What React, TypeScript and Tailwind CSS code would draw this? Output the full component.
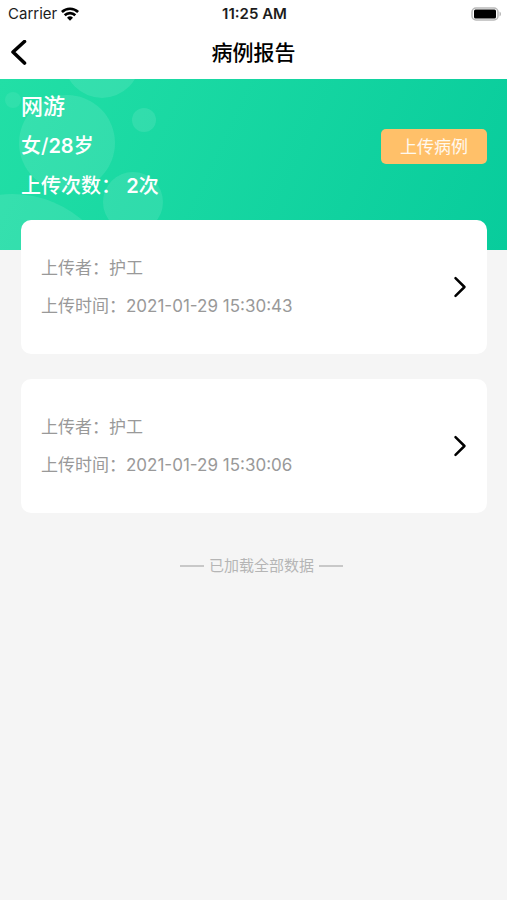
interface Report {
  uploader: string
  time: string
}

const reports: Report[] = [
  { uploader: '护工', time: '2021-01-29 15:30:43' },
  { uploader: '护工', time: '2021-01-29 15:30:06' },
]

function StatusBar() {
  return (
    <div className="grid h-7 grid-cols-[1fr_auto_1fr] items-center pr-1.5 pl-2 text-[15px] text-[#1c1c1c]">
      <div className="flex items-center gap-1">
        <span>Carrier</span>
        <svg width="18" height="14" viewBox="0 0 18 14" fill="none" stroke="#000" strokeWidth="2.6" aria-hidden="true">
          <path d="M0.900 5a11.600 11.600 0 0 1 16.200 0" />
          <path d="M3.700 8.300a7.600 7.600 0 0 1 10.600 0" />
          <path d="M9 13.800 6 10.800a4.300 4.300 0 0 1 6 0Z" fill="#000" stroke="none" />
        </svg>
      </div>
      <span className="text-center font-semibold">11:25 AM</span>
      <svg className="justify-self-end" width="30" height="15" viewBox="0 0 30 15" aria-hidden="true">
        <rect x="1" y="1" width="26" height="12" rx="4" fill="#fff" stroke="#b9b9b9" strokeWidth="1.5" />
        <rect x="3" y="2.500" width="22" height="9" rx="1.5" fill="#000" />
        <path d="M28.500 4.500v5c1-.5 1.500-1.300 1.500-2.500S29.500 5 28.500 4.500Z" fill="#b9b9b9" />
      </svg>
    </div>
  )
}

function NavBar() {
  return (
    <header className="grid h-[51px] grid-cols-[48px_1fr_48px] items-center pb-0.5">
      <button type="button" aria-label="返回" className="flex h-full items-center pl-2">
        <svg width="20" height="26" viewBox="0 0 20 26" fill="none" stroke="#000" strokeWidth="3.6" strokeLinecap="round" strokeLinejoin="round">
          <path d="M16.500 1.500 5 12l11.500 11" />
        </svg>
      </button>
      <h1 className="text-center text-[21px] font-medium text-black">病例报告</h1>
    </header>
  )
}

function Bubbles() {
  return (
    <svg className="absolute top-0 left-0" width="200" height="171" viewBox="0 0 200 171" fill="#fff" fillOpacity="0.1" aria-hidden="true">
      <circle cx="102" cy="-19" r="38" />
      <circle cx="13" cy="21" r="8" fillOpacity="0.07" />
      <circle cx="67" cy="64" r="48" />
      <circle cx="144" cy="41" r="12" />
      <circle cx="133" cy="123" r="30" />
      <circle cx="12" cy="223" r="108" />
    </svg>
  )
}

function ReportCard({ uploader, time }: Report) {
  return (
    <button type="button" className="flex h-[134px] w-full items-center justify-between rounded-[10px] bg-white px-5 text-left">
      <span className="flex flex-col gap-3 text-[17px] leading-[26px] text-[#999]">
        <span>上传者：{uploader}</span>
        <span>上传时间：{time}</span>
      </span>
      <svg width="14" height="22" viewBox="0 0 14 22" fill="none" stroke="#000" strokeWidth="2.5" strokeLinecap="round" strokeLinejoin="round" aria-hidden="true">
        <path d="M2.500 2.200 11.500 11l-9 8.800" />
      </svg>
    </button>
  )
}

export default function App() {
  return (
    <div className="min-h-screen bg-[#f5f5f5] font-['Inter','Noto_Sans_CJK_SC',sans-serif]">
      <div className="bg-white">
        <StatusBar />
        <NavBar />
      </div>

      <section className="relative h-[171px] overflow-hidden bg-linear-[115deg] from-[#22dfa6] to-[#08cc9c] pr-5 pl-[21px]">
        <Bubbles />
        <div className="relative flex items-center justify-between pt-[7px]">
          <div className="text-xl leading-10 font-medium text-white">
            <h2 className="text-[22px]">网游</h2>
            <p>女/<b className="font-semibold">28</b>岁</p>
            <p>上传次数： <b className="font-semibold">2</b>次</p>
          </div>
          <button type="button" className="h-[35px] rounded-[5px] bg-[#ffc069] px-[19px] pt-1 text-[17px] text-white/90">
            上传病例
          </button>
        </div>
      </section>

      <main className="relative -mt-[30px] flex flex-col gap-[25px] pr-5 pl-[21px]">
        {reports.map((r) => (
          <ReportCard key={r.time} {...r} />
        ))}
      </main>

      <div className="mt-[41px] flex items-center justify-center gap-[5px] pl-4 text-[15px] leading-6 text-[#b5b5b5]">
        <span className="h-[2px] w-6 bg-[#c8c8c8]" />
        <span>已加载全部数据</span>
        <span className="h-[2px] w-6 bg-[#c8c8c8]" />
      </div>
    </div>
  )
}
